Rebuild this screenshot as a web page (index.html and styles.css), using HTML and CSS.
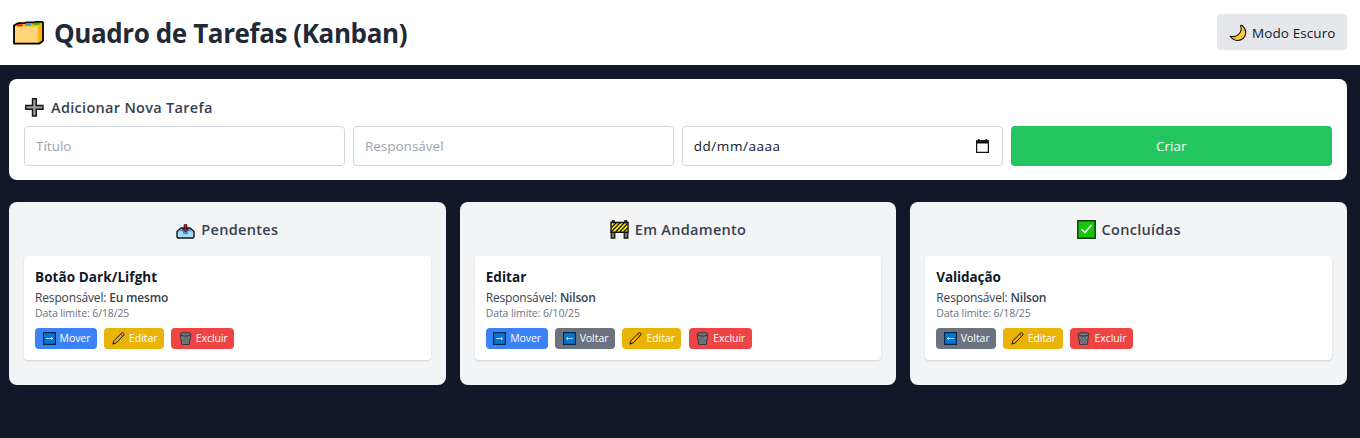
FILE: index.html
```html
<!DOCTYPE html>
<html lang="pt-BR">
<head>
<meta charset="utf-8">
<title>Quadro de Tarefas (Kanban)</title>
<link rel="stylesheet" href="styles.css">
</head>
<body>
<svg class="defs" width="0" height="0">
  <symbol id="arrow-right" viewBox="0 0 13 13"><rect x=".6" y=".6" width="11.8" height="11.8" fill="#0078d7" stroke="#0b2540" stroke-width="1.2"/><path d="M3 6.5h6.500M8 5l1.600 1.500L8 8" fill="none" stroke="#d7ebfb" stroke-width=".8"/></symbol>
  <symbol id="arrow-left" viewBox="0 0 13 13"><rect x=".6" y=".6" width="11.8" height="11.8" fill="#0078d7" stroke="#0b2540" stroke-width="1.2"/><path d="M10 6.500H3.500M5 5L3.400 6.500 5 8" fill="none" stroke="#d7ebfb" stroke-width=".8"/></symbol>
  <symbol id="pencil" viewBox="0 0 13 13"><path d="M.9 12.100l1-3.300L9.300 1.400q1.200-1.100 2.200-.1t-.1 2.200L4.100 11z" fill="#e9b21a" stroke="#1d1708" stroke-width="1" stroke-linejoin="round"/><path d="M9.300 1.400q1.200-1.100 2.200-.1t-.1 2.200l-.6.600L8.700 2z" fill="#ef9a9a" stroke="#1d1708" stroke-width=".7"/><path d="M1 12l.5-1.500 1 1z" fill="#111"/></symbol>
  <symbol id="trash" viewBox="0 0 13 13"><path d="M1.500 3.200h10l-1.200 9.200H2.700z" fill="#7b848b" stroke="#2a2e32" stroke-width=".9"/><path d="M3.500 4l5.500 7M6 4l4 5M3 7l3.500 4.500M9.500 4L4 11M7 4L3 9M10.500 6.500L7 11.500" stroke="#454b50" stroke-width=".5"/><ellipse cx="6.500" cy="2.300" rx="5.700" ry="1.700" fill="#727a80" stroke="#2a2e32" stroke-width=".9"/></symbol>
</svg>
<header class="header">
  <h1 class="title">
    <svg class="title-icon" viewBox="0 0 32 24"><path d="M2 4.500l4-2.300h6l3-.9h5l2 .2 2-.7h5.500l1.500.8v18.200l-3.500 2.700H2z" fill="#ffb300" stroke="#000" stroke-width="1.800" stroke-linejoin="round"/><path d="M3 5.500h22v16H3z" fill="#ffd679"/><path d="M25 5.500l1.500-1.500v17.500H25z" fill="#ffc54a"/><path d="M5 4.300h5.500" stroke="#e81224" stroke-width="2"/><path d="M13.500 3.500h5.500" stroke="#3a96dd" stroke-width="2"/><path d="M21.500 2.800h6" stroke="#16c60c" stroke-width="2"/></svg>
    <span>Quadro de Tarefas (Kanban)</span>
  </h1>
  <button class="theme">
    <svg class="theme-icon" viewBox="0 0 18 18"><path d="M12.800 1.300C18 5.500 17.800 12 13.300 15 9 17.700 3.500 16.500 1.200 12.300c3.600.8 7.600-.2 9.700-3.500 1.600-2.500 1.600-5 .6-7z" fill="#ffc83d" stroke="#1a1712" stroke-width="1.100" stroke-linejoin="round"/><path d="M14.700 5.500l.4 2M5 14l1.500.5M12 12.500l1 .3" stroke="#d99a18" stroke-width="1"/></svg>
    <span>Modo Escuro</span>
  </button>
</header>
<main class="main">
  <section class="panel">
    <h2 class="panel-title">
      <svg class="plus" viewBox="0 0 19 19"><path d="M7.500 .8h3.800V7.500H18v3.800h-6.700V18H7.500v-6.700H.8V7.500h6.700z" fill="#9a9a9a" stroke="#151515" stroke-width="1.400"/></svg>
      <span>Adicionar Nova Tarefa</span>
    </h2>
    <form class="form">
      <div class="field hint"><span class="t-titulo">Título</span></div>
      <div class="field hint"><span class="t-resp">Responsável</span></div>
      <div class="field"><span class="t-date">dd/mm/aaaa</span>
        <svg class="calendar" viewBox="0 0 13 14"><path d="M.6 2h11.800v11.300H.6z" fill="#fff" stroke="#111" stroke-width="1.200"/><path d="M0 1.300h13v3.300H0zM2 0h1.500v2H2zM9.500 0H11v2H9.500z" fill="#111"/></svg>
      </div>
      <button type="button" class="create">Criar</button>
    </form>
  </section>
  <section class="board">
    <div class="column">
      <h2 class="column-title">
        <svg class="column-icon" viewBox="0 0 19 19"><path d="M1 11.500l4-3.500h9l4 3.500v5q0 1.500-1.800 1.500H2.800Q1 18 1 16.500z" fill="#a9d8f5" stroke="#111" stroke-width="1.400" stroke-linejoin="round"/><path d="M3 11.300l3-2.300h7l3 2.300h-3.500l-1 2.900h-4l-1-2.900z" fill="#3a96dd"/><path d="M8.200 4.700h2.600v4h1.700L9.500 11.800 6.500 8.700h1.700z" fill="#c50f1f" stroke="#3a0b10" stroke-width=".9"/></svg>
        <span class="h-pend">Pendentes</span>
      </h2>
      <article class="card">
        <h3 class="name n1">Botão Dark/Lifght</h3>
        <p class="owner"><span>Responsável: </span><b class="o1">Eu mesmo</b></p>
        <p class="due">Data limite: 6/18/25</p>
        <div class="actions">
          <button class="btn blue"><svg><use href="#arrow-right"/></svg><span class="mover">Mover</span></button>
          <button class="btn yellow"><svg><use href="#pencil"/></svg><span>Editar</span></button>
          <button class="btn red"><svg><use href="#trash"/></svg><span>Excluir</span></button>
        </div>
      </article>
    </div>
    <div class="column">
      <h2 class="column-title">
        <svg class="column-icon" viewBox="0 0 19 19"><path d="M1.200 11h3.600v7.200H1.200zM14.200 11h3.600v7.200h-3.600z" fill="#777" stroke="#111" stroke-width="1.200"/><path d="M1 2.500h17v9.700H1z" fill="#fff100" stroke="#111" stroke-width="1.400"/><path d="M1.500 7.500l5-5M1.500 11.500l9-9M5.500 12l9-9.500M9.500 12l8-8.500M13.500 12l4-4" stroke="#111" stroke-width="1.200"/><circle cx="3.300" cy="1.500" r="1.300" fill="#7c1d12" stroke="#111"/><circle cx="15.700" cy="1.500" r="1.300" fill="#7c1d12" stroke="#111"/></svg>
        <span class="h-and">Em Andamento</span>
      </h2>
      <article class="card">
        <h3 class="name n2">Editar</h3>
        <p class="owner"><span>Responsável: </span><b>Nilson</b></p>
        <p class="due">Data limite: 6/10/25</p>
        <div class="actions">
          <button class="btn blue"><svg><use href="#arrow-right"/></svg><span class="mover">Mover</span></button>
          <button class="btn gray"><svg><use href="#arrow-left"/></svg><span>Voltar</span></button>
          <button class="btn yellow"><svg><use href="#pencil"/></svg><span>Editar</span></button>
          <button class="btn red"><svg><use href="#trash"/></svg><span>Excluir</span></button>
        </div>
      </article>
    </div>
    <div class="column">
      <h2 class="column-title">
        <svg class="column-icon" viewBox="0 0 19 19"><path d="M.8.800h17.400v17.400H.8z" fill="#16c60c" stroke="#173b16" stroke-width="1.500"/><path d="M4.500 9.300L8 12.500l6.500-7.500" fill="none" stroke="#fff" stroke-width="1.400"/></svg>
        <span class="h-conc">Concluídas</span>
      </h2>
      <article class="card">
        <h3 class="name n3">Validação</h3>
        <p class="owner"><span>Responsável: </span><b>Nilson</b></p>
        <p class="due">Data limite: 6/18/25</p>
        <div class="actions">
          <button class="btn gray"><svg><use href="#arrow-left"/></svg><span>Voltar</span></button>
          <button class="btn yellow"><svg><use href="#pencil"/></svg><span>Editar</span></button>
          <button class="btn red"><svg><use href="#trash"/></svg><span>Excluir</span></button>
        </div>
      </article>
    </div>
  </section>
</main>
</body>
</html>
```
FILE: styles.css
```css
* { box-sizing: border-box; margin: 0; padding: 0; }
html, body { height: 100%; overflow: hidden; }
body { background: #111827; color: #111827; font-family: "Open Sans", "Noto Sans", sans-serif; font-size: 14px; }
.defs { display: block; height: 0; }
svg { display: block; flex: none; }
span, b, h3, p { white-space: nowrap; }
button { border: 0; font: inherit; color: inherit; }
.header { height: 65px; background: #fff; display: flex; justify-content: space-between; align-items: center; padding: 0 13px 1px 12px; }
.title { display: flex; align-items: center; gap: 10px; font-size: 26px; line-height: 34px; font-weight: 700; color: #1f2937; padding-top: 2px; letter-spacing: -0.4px; }
.title-icon { width: 32px; height: 24px; }
.theme { width: 130px; height: 36px; border-radius: 4px; background: #e5e7eb; display: flex; align-items: center; gap: 5px; padding: 2px 0 0 12px; font-size: 13.500px; letter-spacing: 0.1px; }
.theme-icon { width: 18px; height: 18px; }
.main { padding: 14px 13px 0 9px; }
.panel { height: 101px; background: #fff; border-radius: 8px; padding: 18px 15px 0; }
.panel-title { display: flex; align-items: center; gap: 7px; height: 20px; padding-left: 1px; font-size: 14.500px; font-weight: 600; color: #374151; margin-bottom: 9px; letter-spacing: 0.3px; }
.plus { width: 19px; height: 19px; }
.form { display: grid; grid-template-columns: repeat(4, 1fr); gap: 7.500px; }
.field { height: 40px; border: 1px solid #d1d5db; border-radius: 4px; background: #fff; padding: 0 13px 0 11px; display: flex; align-items: center; justify-content: space-between; font-size: 13.500px; }
.hint { color: #9ca3af; }
.t-titulo, .t-resp { letter-spacing: 0; }
.t-date { letter-spacing: 0.550px; }
.calendar { width: 13px; height: 14px; }
.create { height: 40px; border-radius: 4px; background: #22c55e; color: #fff; font-size: 13.500px; }
.board { display: grid; grid-template-columns: repeat(3, 1fr); gap: 14px; margin-top: 22px; }
.column { height: 183px; background: #f3f4f6; border-radius: 8px; padding: 17px 15px 0; }
.column-title { display: flex; justify-content: center; align-items: center; gap: 6px; height: 20px; font-size: 14.500px; letter-spacing: 0.3px; font-weight: 600; color: #374151; margin-bottom: 17px; }
.column-icon { width: 19px; height: 19px; }
.card { height: 104px; background: #fff; border-radius: 4px; box-shadow: 0 1px 2px rgba(0,0,0,.14); padding: 11px 11px 0; }
.name { font-size: 13.500px; line-height: 20px; font-weight: 700; letter-spacing: 0.080px; }
.n3 { letter-spacing: -0.1px; }
.owner { font-size: 12px; line-height: 20px; padding-top: 1px; height: 20px; color: #374151; display: flex; letter-spacing: -0.150px; }
.owner span { white-space: pre; }
.owner b { font-weight: 600; letter-spacing: -0.2px; }
.due { font-size: 10.500px; line-height: 13px; color: #6b7280; letter-spacing: -0.1px; }
.actions { display: flex; gap: 7.300px; margin-top: 8px; }
.btn { height: 21px; width: 59.500px; border-radius: 4px; display: flex; align-items: center; gap: 4px; padding-left: 7.500px; font-size: 10.500px; letter-spacing: -0.050px; color: #fff; }
.btn span { padding-bottom: 1px; }
.btn svg { width: 13px; height: 13px; }
.blue { background: #3b82f6; width: 62.200px; }
.yellow { background: #eab308; }
.red { background: #ef4444; width: 63px; }
.gray { background: #6b7280; }
```
